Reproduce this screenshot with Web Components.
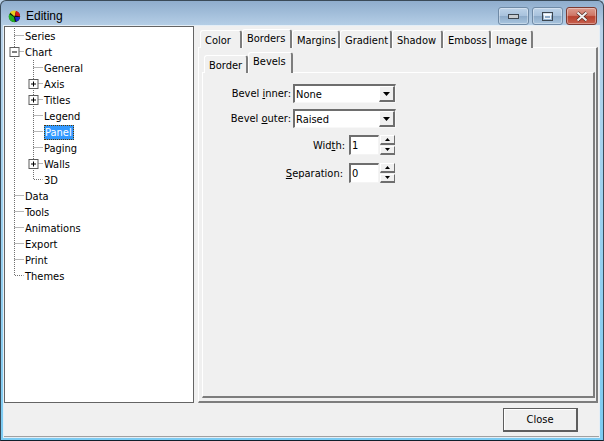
<!DOCTYPE html>
<html>
<head>
<meta charset="utf-8">
<title>Editing</title>
<style>
  html, body { margin: 0; padding: 0; background: #b9d1e8; }
  body { font: 11px "DejaVu Sans Condensed", "DejaVu Sans", sans-serif; font-stretch: condensed; color: #000; }
</style>
</head>
<body>
<app-window caption="Editing">
  <tree-view slot="tree">
    <tree-node label="Series" guides="t"></tree-node>
    <tree-node label="Chart" guides="t" box="minus"></tree-node>
    <tree-node label="General" depth="1" guides="st"></tree-node>
    <tree-node label="Axis" depth="1" guides="st" box="plus"></tree-node>
    <tree-node label="Titles" depth="1" guides="st" box="plus"></tree-node>
    <tree-node label="Legend" depth="1" guides="st"></tree-node>
    <tree-node label="Panel" depth="1" guides="st" selected></tree-node>
    <tree-node label="Paging" depth="1" guides="st"></tree-node>
    <tree-node label="Walls" depth="1" guides="st" box="plus"></tree-node>
    <tree-node label="3D" depth="1" guides="sl"></tree-node>
    <tree-node label="Data" guides="t"></tree-node>
    <tree-node label="Tools" guides="t"></tree-node>
    <tree-node label="Animations" guides="t"></tree-node>
    <tree-node label="Export" guides="t"></tree-node>
    <tree-node label="Print" guides="t"></tree-node>
    <tree-node label="Themes" guides="l"></tree-node>
  </tree-view>
  <tab-pages slot="pages" tabs="Color:42,Borders:50,Margins:48,Gradient:52,Shadow:51,Emboss:48,Image:42" active="1" left="2" class="outer">
    <tab-pages tabs="Border:44,Bevels:45" active="1" left="2" class="inner">
      <bevel-form>
        <form-row label="Bevel &lt;u&gt;i&lt;/u&gt;nner:" gap="2"><combo-box value="None"></combo-box></form-row>
        <form-row label="Bevel &lt;u&gt;o&lt;/u&gt;uter:" gap="2"><combo-box value="Raised"></combo-box></form-row>
        <form-row label="Wid&lt;u&gt;t&lt;/u&gt;h:" gap="4" top="1"><spin-edit value="1"></spin-edit></form-row>
        <form-row label="&lt;u&gt;S&lt;/u&gt;eparation:" gap="6" top="2"><spin-edit value="0"></spin-edit></form-row>
      </bevel-form>
    </tab-pages>
  </tab-pages>
  <push-button slot="footer">Close</push-button>
</app-window>

<script>
const UI_FONT = `font: 11px "DejaVu Sans Condensed", "DejaVu Sans", sans-serif; font-stretch: condensed;`;

class AppWindow extends HTMLElement {
  constructor() {
    super();
    this.attachShadow({ mode: "open" });
  }
  connectedCallback() {
    this.shadowRoot.innerHTML = `
    <style>
      :host {
        display: flex;
        flex-direction: column;
        box-sizing: border-box;
        width: 604px;
        height: 441px;
        border: 1px solid #3a4a58;
        border-bottom-color: #10202c;
        border-radius: 6px 6px 0 0;
        background: linear-gradient(#8fadcd, #b9d2e9 27px, #a9d3ee 120px, #7ccbf2);
        ${UI_FONT}
      }
      .body {
        flex: 1;
        display: flex;
        flex-direction: column;
        margin: 0 4px 3px 3px;
        background: #f0f0f0;
        box-shadow: 0 0 0 1px #e4eef6;
      }
      .main { flex: 1; display: flex; min-height: 0; }
      .left { width: 190px; display: flex; }
      .right { flex: 1; display: flex; margin: 0 1px 0 4px; min-width: 0; }
      .footer {
        box-sizing: border-box;
        flex: none;
        height: 34px;
        display: flex;
        justify-content: flex-end;
        align-items: flex-start;
        padding: 5px 21px 0 0;
        border-bottom: 1px solid #a0a0a0;
      }
    </style>
    <win-titlebar caption="${this.getAttribute("caption")}"></win-titlebar>
    <div class="body">
      <div class="main">
        <div class="left"><slot name="tree"></slot></div>
        <div class="right"><slot name="pages"></slot></div>
      </div>
      <div class="footer"><slot name="footer"></slot></div>
    </div>`;
  }
}

class WinTitlebar extends HTMLElement {
  constructor() {
    super();
    this.attachShadow({ mode: "open" });
  }
  connectedCallback() {
    this.shadowRoot.innerHTML = `
    <style>
      :host {
        display: flex;
        align-items: flex-start;
        height: 25px;
        flex: none;
        color: #000;
      }
      .logo { margin: 9px 0 0 7px; flex: none; }
      .text { margin: 8px 0 0 5px; flex: 1; font: 12px/15px "Liberation Sans", Arial, sans-serif; }
      .btns { display: flex; margin: 6px 6px 0 0; gap: 3px; }
      .btn {
        box-sizing: border-box;
        width: 31px;
        height: 18px;
        border: 1px solid #6f8aa6;
        border-radius: 3px;
        display: flex;
        align-items: center;
        justify-content: center;
        background: linear-gradient(#bed3e8, #a8c2dd 48%, #8eabc9 52%, #a9c5df);
        box-shadow: inset 0 0 0 1px rgba(255,255,255,.35);
      }
      .close {
        border-color: #7c3a32;
        background: linear-gradient(#dc9c8f, #cf7767 46%, #b8412e 54%, #c8614f);
      }
    </style>
    <svg class="logo" width="13" height="13" viewBox="0 0 13 13">
      <circle cx="6.5" cy="6.5" r="5.6" fill="#111"/>
      <path d="M6.5 6.5L2 2.5A6 6 0 0 1 8 .9Z" fill="#e8d020"/>
      <path d="M7 5.5L8 1A5.4 5.4 0 0 1 12 6.5Z" fill="#d81818"/>
      <path d="M7 7L12 7A5.4 5.4 0 0 1 8 11.5Z" fill="#1a2ccf"/>
      <path d="M6 7L7 12.2A5.6 5.6 0 0 1 1.4 4Z" fill="#22b022"/>
    </svg>
    <span class="text">${this.getAttribute("caption")}</span>
    <div class="btns">
      <div class="btn"><svg width="11" height="5"><rect x=".5" y=".5" width="10" height="4" fill="#c8ccd0" stroke="#3c4650"/></svg></div>
      <div class="btn"><svg width="11" height="9"><rect x=".5" y=".5" width="10" height="8" fill="none" stroke="#3c4650"/><rect x="1.5" y="1.5" width="8" height="1.5" fill="#fff"/><rect x="2.5" y="3.5" width="6" height="3" fill="#8eabc9" stroke="#eef4fa"/></svg></div>
      <div class="btn close"><svg width="14" height="11" viewBox="0 0 14 11"><path d="M2.5 1.5L11.5 9.5M11.5 1.5L2.5 9.5" stroke="#4a2018" stroke-width="3.4"/><path d="M2.5 1.5L11.5 9.5M11.5 1.5L2.5 9.5" stroke="#f0f0f0" stroke-width="2.2"/></svg></div>
    </div>`;
  }
}

class TreeView extends HTMLElement {
  constructor() {
    super();
    this.attachShadow({ mode: "open" });
  }
  connectedCallback() {
    this.shadowRoot.innerHTML = `
    <style>
      :host {
        display: block;
        box-sizing: border-box;
        width: 190px;
        background: #fff;
        border: 1px solid #646464;
        padding-top: 1px;
      }
    </style>
    <slot></slot>`;
  }
}

// one row of the tree: guides says which dotted lines go through it
// s = parent's line goes on, t = branch, l = last branch
class TreeNode extends HTMLElement {
  constructor() {
    super();
    this.attachShadow({ mode: "open" });
  }
  connectedCallback() {
    const depth = +(this.getAttribute("depth") || 0);
    const guides = this.getAttribute("guides") || "";
    const box = this.getAttribute("box");
    const selected = this.hasAttribute("selected");
    const xs = [9.5, 28.5];
    let lines = "";
    [...guides].forEach((g, i) => {
      const x = xs[i];
      if (g === "s") lines += `<path d="M${x} 0V16"/>`;
      if (g === "t") lines += `<path d="M${x} 0V16M${x} 7.5H${x + 9}"/>`;
      if (g === "l") lines += `<path d="M${x} 0V7.5H${x + 9}"/>`;
    });
    let boxSvg = "";
    if (box) {
      const cx = xs[depth] - .5;
      boxSvg = `<rect x="${cx - 4}" y="3.5" width="9" height="9" fill="#fff" stroke="#5c5c5c"/>
        <path d="M${cx - 2} 8H${cx + 3}${box === "plus" ? `M${cx + .5} 5.5V10.5` : ""}" stroke="#000" fill="none"/>`;
    }
    this.shadowRoot.innerHTML = `
    <style>
      :host {
        display: flex;
        height: 16px;
        align-items: center;
        color: #000;
        ${UI_FONT}
      }
      svg { flex: none; display: block; }
      .label { line-height: 15px; padding: 1px 1px 0 0; white-space: nowrap; }
      .sel {
        box-sizing: border-box;
        height: 15px;
        line-height: 13px;
        background: #3399ff;
        color: #fff;
        outline: 1px dotted #5a3a00;
        outline-offset: -1px;
        padding: 1px 2px 0 1px;
      }
    </style>
    <svg width="${depth ? 39 : 20}" height="16">
      <g fill="none" stroke="#707070" stroke-dasharray="1 1">${lines}</g>${boxSvg}
    </svg>
    <span class="label ${selected ? "sel" : ""}">${this.getAttribute("label")}</span>`;
  }
}

class TabPages extends HTMLElement {
  constructor() {
    super();
    this.attachShadow({ mode: "open" });
  }
  connectedCallback() {
    const active = +this.getAttribute("active");
    const inner = this.classList.contains("inner");
    const tabs = this.getAttribute("tabs").split(",").map((t, i) => {
      const [name, w] = t.split(":");
      return `<div class="tab ${i === active ? "on" : ""}" style="width:${w}px">${name}</div>`;
    }).join("");
    this.shadowRoot.innerHTML = `
    <style>
      :host {
        display: flex;
        flex-direction: column;
        flex: 1;
        min-width: 0;
        ${UI_FONT}
      }
      .strip {
        display: flex;
        height: 21px;
        align-items: flex-end;
        padding-left: ${this.getAttribute("left")}px;
        flex: none;
        position: relative;
        z-index: 1;
        margin: ${inner ? 0 : 1}px 0 -1px;
      }
      .tab {
        box-sizing: border-box;
        height: 18px;
        line-height: 19px;
        padding-left: 4px;
        background: #f0f0f0;
        border-top: 1px solid #fff;
        border-left: 1px solid #fff;
        border-right: 2px solid #7d7d7d;
        border-radius: 3px 3px 0 0;
        white-space: nowrap;
      }
      .on {
        height: ${inner ? 21 : 19}px;
        line-height: 17px;
      }
      .page {
        flex: 1;
        display: flex;
        min-height: 0;
        background: #f0f0f0;
        border-top: 1px solid #fff;
        border-left: 1px solid #fff;
        border-right: 2px solid #7d7d7d;
        border-bottom: 2px solid #7d7d7d;
        padding: ${inner ? "0" : "4px 1px 3px 3px"};
      }
    </style>
    <div class="strip">${tabs}</div>
    <div class="page"><slot></slot></div>`;
  }
}

class BevelForm extends HTMLElement {
  constructor() {
    super();
    this.attachShadow({ mode: "open" });
  }
  connectedCallback() {
    this.shadowRoot.innerHTML = `
    <style>
      :host {
        display: flex;
        flex-direction: column;
        width: 193px;
        gap: 6px;
        padding-top: 11px;
      }
    </style>
    <slot></slot>`;
  }
}

class FormRow extends HTMLElement {
  constructor() {
    super();
    this.attachShadow({ mode: "open" });
  }
  connectedCallback() {
    this.shadowRoot.innerHTML = `
    <style>
      :host {
        display: flex;
        justify-content: flex-end;
        align-items: center;
        gap: ${this.getAttribute("gap")}px;
        margin-top: ${this.getAttribute("top") || 0}px;
        ${UI_FONT}
      }
      span { white-space: nowrap; }
    </style>
    <span>${this.getAttribute("label")}</span>
    <slot></slot>`;
  }
}

class ComboBox extends HTMLElement {
  constructor() {
    super();
    this.attachShadow({ mode: "open" });
  }
  connectedCallback() {
    this.shadowRoot.innerHTML = `
    <style>
      :host {
        display: flex;
        align-items: center;
        box-sizing: border-box;
        width: 103px;
        height: 19px;
        background: #fff;
        border-top: 2px solid #6e6e6e;
        border-left: 2px solid #6e6e6e;
        border-right: 1px solid #f8f8f8;
        border-bottom: 1px solid #f8f8f8;
        ${UI_FONT}
      }
      .val { flex: 1; padding: 1px 0 0 1px; line-height: 15px; }
      .arrow {
        box-sizing: border-box;
        width: 16px;
        height: 16px;
        background: #f0f0f0;
        border-right: 2px solid #6e6e6e;
        border-bottom: 2px solid #6e6e6e;
        border-top: 1px solid #fff;
        border-left: 1px solid #fff;
        display: flex;
        align-items: center;
        justify-content: center;
      }
    </style>
    <span class="val">${this.getAttribute("value")}</span>
    <div class="arrow"><svg width="7" height="4"><path d="M0 0H7L3.5 4Z" fill="#000"/></svg></div>`;
  }
}

class SpinEdit extends HTMLElement {
  constructor() {
    super();
    this.attachShadow({ mode: "open" });
  }
  connectedCallback() {
    this.shadowRoot.innerHTML = `
    <style>
      :host {
        display: flex;
        gap: 1px;
        height: 20px;
        margin-right: 1px;
        ${UI_FONT}
      }
      .edit {
        box-sizing: border-box;
        width: 30px;
        background: #fff;
        border-top: 2px solid #6e6e6e;
        border-left: 2px solid #6e6e6e;
        border-right: 1px solid #f4f4f4;
        border-bottom: 1px solid #f4f4f4;
        padding: 1px 0 0 1px;
        line-height: 15px;
      }
      .btns { display: flex; flex-direction: column; gap: 1px; width: 15px; }
      .btns div {
        flex: 1;
        box-sizing: border-box;
        background: #f0f0f0;
        border-top: 1px solid #fff;
        border-left: 1px solid #fff;
        border-right: 1px solid #6e6e6e;
        border-bottom: 2px solid #6e6e6e;
        display: flex;
        align-items: center;
        justify-content: center;
      }
    </style>
    <div class="edit">${this.getAttribute("value")}</div>
    <div class="btns">
      <div><svg width="5" height="3"><path d="M2.5 0L5 3H0Z" fill="#000"/></svg></div>
      <div><svg width="5" height="3"><path d="M0 0H5L2.5 3Z" fill="#000"/></svg></div>
    </div>`;
  }
}

class PushButton extends HTMLElement {
  constructor() {
    super();
    this.attachShadow({ mode: "open" });
  }
  connectedCallback() {
    this.shadowRoot.innerHTML = `
    <style>
      :host {
        display: flex;
        align-items: center;
        justify-content: center;
        box-sizing: border-box;
        width: 75px;
        height: 24px;
        background: #f0f0f0;
        border: 1px solid #5e5e5e;
        border-right-width: 2px;
        border-bottom-width: 2px;
        box-shadow: inset 1px 1px 0 #fff;
        ${UI_FONT}
      }
    </style>
    <slot></slot>`;
  }
}

customElements.define("win-titlebar", WinTitlebar);
customElements.define("tree-view", TreeView);
customElements.define("tree-node", TreeNode);
customElements.define("tab-pages", TabPages);
customElements.define("bevel-form", BevelForm);
customElements.define("form-row", FormRow);
customElements.define("combo-box", ComboBox);
customElements.define("spin-edit", SpinEdit);
customElements.define("push-button", PushButton);
customElements.define("app-window", AppWindow);
</script>
</body>
</html>
